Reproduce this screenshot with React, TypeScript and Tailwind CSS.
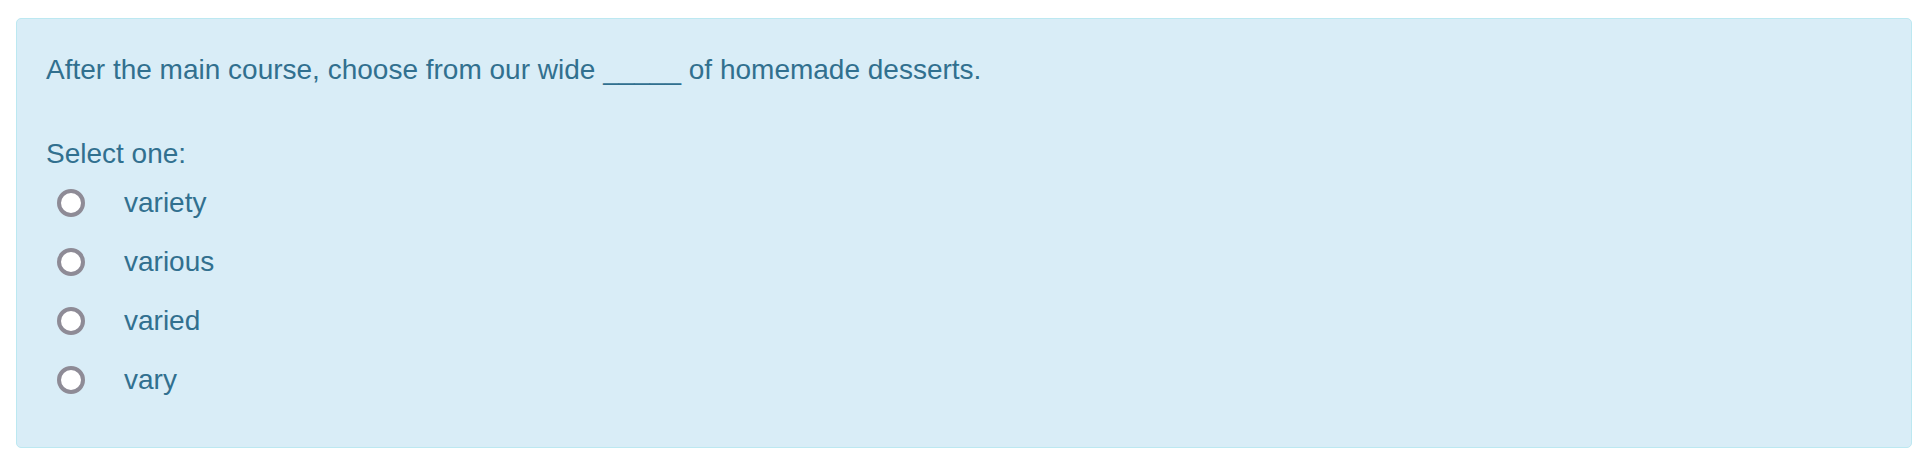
const options = ["variety", "various", "varied", "vary"];

export default function App() {
  return (
    <div className="min-h-screen bg-white pl-4 pr-[18px] pt-[18px] font-['Liberation_Sans',Arial,sans-serif]">
      <div className="rounded-[5px] border border-[#bce8f1] bg-[#d9edf7] px-[29px] pt-[30px] pb-[38px] text-[28px] leading-[42px] text-[#31708f]">
        <p>After the main course, choose from our wide _____ of homemade desserts.</p>
        <p className="mt-[42px]">Select one:</p>
        <div className="-mt-[2px] flex flex-col">
          {options.map((opt) => (
            <label key={opt} className="flex h-[59px] items-center">
              <span className="ml-[11px] box-border h-[28px] w-[28px] rounded-full border-[4px] border-[#8e8b96] bg-white" />
              <span className="ml-[39px]">{opt}</span>
            </label>
          ))}
        </div>
      </div>
    </div>
  );
}
